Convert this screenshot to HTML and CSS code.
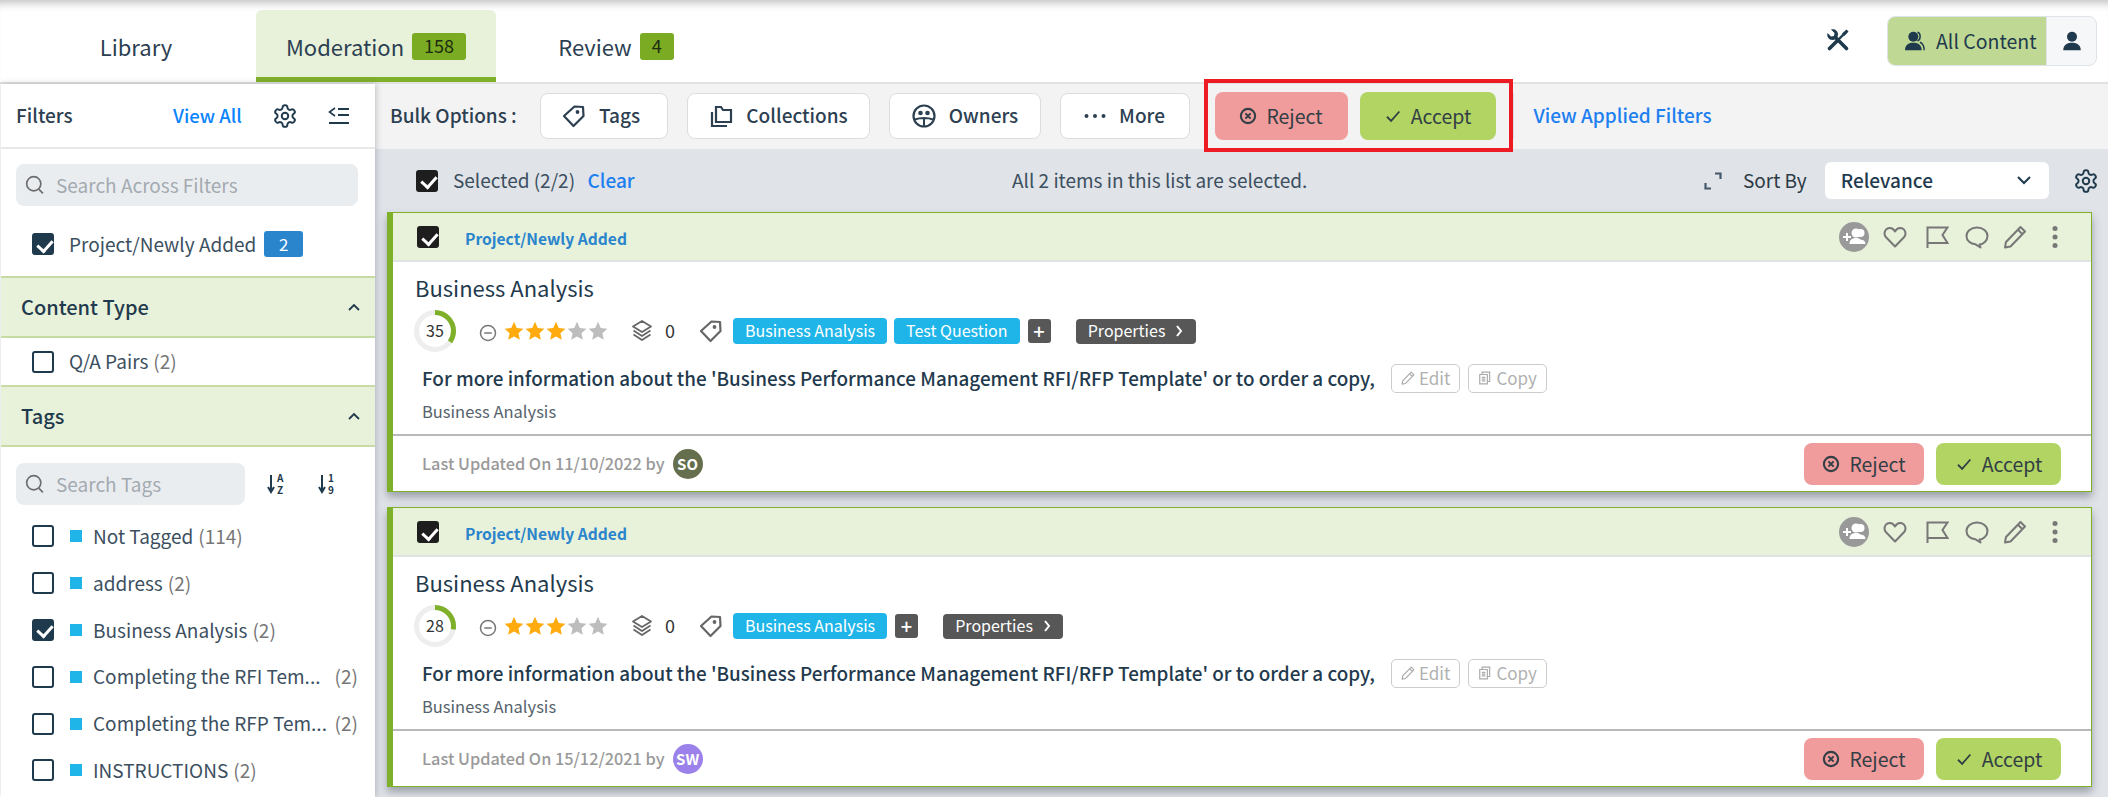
FILE: index.html
```html
<!DOCTYPE html>
<html lang="en">
<head>
<meta charset="utf-8">
<title>Moderation</title>
<link rel="stylesheet" href="styles.css">
</head>
<body>
<svg class="defs" width="0" height="0" aria-hidden="true">
  <defs>
    <symbol id="i-gear" viewBox="0 0 24 24"><path fill="none" stroke="currentColor" stroke-width="1.800" stroke-linejoin="round" d="M12.220 2h-.44a2 2 0 0 0-2 2v.18a2 2 0 0 1-1 1.730l-.43.25a2 2 0 0 1-2 0l-.15-.08a2 2 0 0 0-2.730.73l-.22.38a2 2 0 0 0 .73 2.730l.15.1a2 2 0 0 1 1 1.720v.51a2 2 0 0 1-1 1.740l-.15.09a2 2 0 0 0-.73 2.730l.22.38a2 2 0 0 0 2.730.73l.15-.08a2 2 0 0 1 2 0l.43.25a2 2 0 0 1 1 1.730V20a2 2 0 0 0 2 2h.44a2 2 0 0 0 2-2v-.18a2 2 0 0 1 1-1.730l.43-.25a2 2 0 0 1 2 0l.15.08a2 2 0 0 0 2.730-.73l.22-.39a2 2 0 0 0-.73-2.730l-.15-.08a2 2 0 0 1-1-1.740v-.5a2 2 0 0 1 1-1.740l.15-.09a2 2 0 0 0 .73-2.730l-.22-.38a2 2 0 0 0-2.730-.73l-.15.08a2 2 0 0 1-2 0l-.43-.25a2 2 0 0 1-1-1.730V4a2 2 0 0 0-2-2z"/><circle cx="12" cy="12" r="3" fill="none" stroke="currentColor" stroke-width="1.800"/></symbol>
    <symbol id="i-tag" viewBox="0 0 24 24"><path fill="none" stroke="currentColor" stroke-width="2.200" stroke-linejoin="round" d="M12.500 2.500l8.500.5.500 9L11.500 22 2 12z"/><circle cx="15.500" cy="8" r="1.900" fill="currentColor"/></symbol>
    <symbol id="i-search" viewBox="0 0 24 24"><circle cx="10.500" cy="10.500" r="8.500" fill="none" stroke="currentColor" stroke-width="2"/><path d="M16.500 17l5 5" stroke="currentColor" stroke-width="2" fill="none"/></symbol>
    <symbol id="i-reject" viewBox="0 0 24 24"><circle cx="12" cy="12" r="9.500" fill="none" stroke="currentColor" stroke-width="2.800"/><path d="M8.500 8.500l7 7M15.500 8.500l-7 7" stroke="currentColor" stroke-width="2.800" fill="none"/></symbol>
    <symbol id="i-check" viewBox="0 0 24 24"><path d="M4 13l5.500 5.500L20.500 6" stroke="currentColor" stroke-width="2.400" fill="none"/></symbol>
    <symbol id="i-star" viewBox="0 0 24 24"><path fill="currentColor" d="M12 1l3.300 7.400 8 .9-6 5.400 1.700 7.900-7-4.100-7 4.100 1.700-7.900-6-5.400 8-.9z"/></symbol>
    <symbol id="i-layers" viewBox="0 0 24 24"><path fill="none" stroke="currentColor" stroke-width="1.800" stroke-linejoin="round" d="M12 2l9 5.500-9 5.500-9-5.500zM3.500 11.500L12 17l8.500-5.500M3.500 15.500L12 21l8.500-5.500"/></symbol>
    <symbol id="i-minus" viewBox="0 0 24 24"><circle cx="12" cy="12" r="10" fill="none" stroke="currentColor" stroke-width="2"/><path d="M7 12h10" stroke="currentColor" stroke-width="2"/></symbol>
    <symbol id="i-heart" viewBox="0 0 24 24"><path fill="none" stroke="currentColor" stroke-width="2" stroke-linejoin="round" d="M12 21.500L2.800 12C.5 9 1.500 4.500 5 3.300 8 2.300 10.500 3.800 12 6.500c1.500-2.700 4-4.200 7-3.200 3.500 1.200 4.500 5.700 2.200 8.700z"/></symbol>
    <symbol id="i-flag" viewBox="0 0 24 24"><path fill="none" stroke="currentColor" stroke-width="2" d="M2.500 23V2.500h20L17.500 10l5 8H2.500"/></symbol>
    <symbol id="i-bubble" viewBox="0 0 24 24"><path fill="none" stroke="currentColor" stroke-width="2" stroke-linejoin="round" d="M12 2.500c6 0 10.500 3.700 10.500 8.500S18 19.500 14.500 19.500l1 3-5-3.200C5.500 19 1.500 15.800 1.500 11S6 2.500 12 2.500z"/></symbol>
    <symbol id="i-pencil" viewBox="0 0 24 24"><path fill="none" stroke="currentColor" stroke-width="2" stroke-linejoin="round" d="M17.500 2l4.500 4.500L7.500 21.500 2 22.500l1-5.500zM15 4.800l4.300 4.300"/></symbol>
    <symbol id="i-user" viewBox="0 0 24 24"><circle cx="12" cy="7" r="6" fill="currentColor"/><path fill="currentColor" d="M1.500 23c0-6 4-9 10.500-9s10.500 3 10.500 9z"/></symbol>
    <symbol id="i-users" viewBox="0 0 24 24"><circle cx="10" cy="7" r="6" fill="currentColor"/><path fill="currentColor" d="M0 23c0-6 3.500-9 10-9s10 3 10 9z"/><path fill="none" stroke="currentColor" stroke-width="1.800" d="M15 1.500c4 .8 4.500 8.500 0 10.500M18 13.500c3.500 1.500 5 5 5 9.500"/></symbol>
    <symbol id="i-addusers" viewBox="0 0 30 30"><circle cx="15" cy="15" r="15" fill="#999"/><path fill="#fff" d="M4 14h3v-3h2v3h3v2H9v3H7v-3H4z"/><circle cx="17" cy="11" r="4.500" fill="#fff"/><circle cx="21.500" cy="11" r="4" fill="#fff"/><path fill="#fff" d="M10.500 22c0-4 2.500-6 6.500-6 2.200 0 4 .6 5 1.800 2.500 0 4.500 1.500 4.500 4.200z"/></symbol>
    <symbol id="i-dots" viewBox="0 0 6 24"><circle cx="3" cy="3.500" r="2.500" fill="currentColor"/><circle cx="3" cy="12" r="2.500" fill="currentColor"/><circle cx="3" cy="20.500" r="2.500" fill="currentColor"/></symbol>
    <symbol id="i-copy" viewBox="0 0 24 24"><path fill="none" stroke="currentColor" stroke-width="2" d="M7 6V2h13v16h-4M3 6h13v16H3zM6.500 11h6M6.500 14h6M6.500 17h6"/></symbol>
  </defs>
</svg>

<div class="app">
  <header class="topbar">
    <nav class="tabs">
      <a class="tab tab-library">Library</a>
      <a class="tab tab-active">Moderation <span class="count">158</span></a>
      <a class="tab tab-review">Review <span class="count">4</span></a>
    </nav>
    <div class="top-right">
      <svg class="tools" viewBox="0 0 24 24"><path fill="none" stroke="#1f3a4d" stroke-width="3.600" stroke-linecap="round" d="M3.500 20.500L11 13"/><path fill="none" stroke="#1f3a4d" stroke-width="2.400" d="M11 13l6.500-6.500"/><path fill="#1f3a4d" d="M16 5.500L20.500 1.500 22.500 3.500 18.500 8z"/><path fill="none" stroke="#1f3a4d" stroke-width="3.600" stroke-linecap="round" d="M9.500 9.500l11 11"/><path fill="#1f3a4d" d="M1.500 5L5 8.500l3-.5.5-3L5 1.500c3.500-1 7 1.200 7 5 0 1-.3 2-.8 2.800L9.300 11.200c-.8.500-1.800.8-2.800.8-3.800 0-6-3.500-5-7z"/></svg>
      <div class="scope">
        <div class="scope-all"><svg class="ic-20"><use href="#i-users"/></svg>All Content</div>
        <div class="scope-me"><svg class="ic-20"><use href="#i-user"/></svg></div>
      </div>
    </div>
  </header>

  <div class="main">
    <aside class="sidebar">
      <div class="side-head">
        <span class="side-title">Filters</span>
        <a class="view-all">View All</a>
        <svg class="gear side-gear"><use href="#i-gear"/></svg>
        <svg class="side-collapse" viewBox="0 0 22 20"><path d="M7 2L1.500 6 7 10" fill="none" stroke="#1f3a4d" stroke-width="1.600"/><path d="M10 3h11M10 9h11M1 17h20" stroke="#1f3a4d" stroke-width="1.800"/></svg>
      </div>
      <div class="side-search-wrap">
        <div class="search"><svg class="ic-20"><use href="#i-search"/></svg>Search Across Filters</div>
      </div>
      <label class="row row-applied"><span class="cb on"></span><span class="row-name">Project/Newly Added</span><span class="applied-num">2</span></label>

      <div class="group-head">Content Type<svg class="chev" viewBox="0 0 12 8"><path d="M1 7l5-5 5 5" fill="none" stroke="#1f3a4d" stroke-width="1.800"/></svg></div>
      <label class="row row-type"><span class="cb"></span><span class="row-name">Q/A Pairs</span><span class="n n-gap">(2)</span></label>

      <div class="group-head">Tags<svg class="chev" viewBox="0 0 12 8"><path d="M1 7l5-5 5 5" fill="none" stroke="#1f3a4d" stroke-width="1.800"/></svg></div>
      <div class="tag-tools">
        <div class="search search-tags"><svg class="ic-20"><use href="#i-search"/></svg>Search Tags</div>
        <span class="sort-ic"><svg viewBox="0 0 8 20" class="sort-arrow"><path d="M4 1v16M1 13l3 5 3-5" fill="none" stroke="#1f3a4d" stroke-width="2"/></svg><span class="sort-t">A<br>Z</span></span>
        <span class="sort-ic"><svg viewBox="0 0 8 20" class="sort-arrow"><path d="M4 1v16M1 13l3 5 3-5" fill="none" stroke="#1f3a4d" stroke-width="2"/></svg><span class="sort-t">1<br>9</span></span>
      </div>
      <ul class="tag-list">
        <li class="row"><span class="cb"></span><i class="sq"></i><span class="row-name">Not Tagged</span><span class="n n-gap">(114)</span></li>
        <li class="row"><span class="cb"></span><i class="sq"></i><span class="row-name">address</span><span class="n n-gap">(2)</span></li>
        <li class="row"><span class="cb on"></span><i class="sq"></i><span class="row-name">Business Analysis</span><span class="n n-gap">(2)</span></li>
        <li class="row"><span class="cb"></span><i class="sq"></i><span class="row-name">Completing the RFI Tem...</span><span class="n n-end">(2)</span></li>
        <li class="row"><span class="cb"></span><i class="sq"></i><span class="row-name">Completing the RFP Tem...</span><span class="n n-end">(2)</span></li>
        <li class="row"><span class="cb"></span><i class="sq"></i><span class="row-name">INSTRUCTIONS</span><span class="n n-gap">(2)</span></li>
      </ul>
    </aside>

    <section class="content">
      <div class="toolbar">
        <span class="bulk-label">Bulk Options :</span>
        <button class="tbtn tbtn-tags"><svg class="ic-24"><use href="#i-tag"/></svg>Tags</button>
        <button class="tbtn tbtn-coll"><svg class="ic-24" viewBox="0 0 24 24"><path fill="none" stroke="currentColor" stroke-width="2.200" d="M3 8v14h15M7 3v15h15V6H14l-2-3z"/></svg>Collections</button>
        <button class="tbtn tbtn-own"><svg class="ic-24" viewBox="0 0 24 24"><circle cx="12" cy="12" r="10.500" fill="none" stroke="currentColor" stroke-width="2.200"/><circle cx="8.500" cy="9" r="2.300" fill="currentColor"/><circle cx="15.500" cy="9" r="2.300" fill="currentColor"/><path d="M3 15.500c5-2 13-2 18 0M12 14v8" stroke="currentColor" stroke-width="2" fill="none"/></svg>Owners</button>
        <button class="tbtn tbtn-more"><svg class="ell" viewBox="0 0 22 4"><circle cx="2.500" cy="2" r="2" fill="currentColor"/><circle cx="11" cy="2" r="2" fill="currentColor"/><circle cx="19.500" cy="2" r="2" fill="currentColor"/></svg>More</button>
        <button class="act act-reject act-lg"><svg class="ic-18"><use href="#i-reject"/></svg>Reject</button>
        <button class="act act-accept act-lg act-lg-accept"><svg class="ic-18"><use href="#i-check"/></svg>Accept</button>
        <span class="tb-sep"></span>
        <a class="applied">View Applied Filters</a>
        <div class="highlight"></div>
      </div>

      <div class="selbar">
        <span class="cb dark"></span>
        <span class="sel-text">Selected (2/2)</span>
        <a class="clear">Clear</a>
        <span class="sel-all">All 2 items in this list are selected.</span>
        <svg class="expand" viewBox="0 0 18 18"><path d="M11 1.500h5.500V7M7 16.500H1.500V11" fill="none" stroke="#44586a" stroke-width="2.200"/></svg>
        <span class="sort-by">Sort By</span>
        <div class="select">Relevance<svg class="sel-chev" viewBox="0 0 14 9"><path d="M1 1l6 6 6-6" fill="none" stroke="#1f3a4d" stroke-width="2"/></svg></div>
        <svg class="gear sel-gear"><use href="#i-gear"/></svg>
      </div>

      <div class="cards">
        <article class="card">
          <div class="card-head">
            <span class="cb dark"></span><a class="crumb">Project/Newly Added</a>
            <div class="head-icons">
              <svg class="hi-add"><use href="#i-addusers"/></svg>
              <svg class="hi hi-heart"><use href="#i-heart"/></svg>
              <svg class="hi hi-flag"><use href="#i-flag"/></svg>
              <svg class="hi hi-bubble"><use href="#i-bubble"/></svg>
              <svg class="hi hi-pencil"><use href="#i-pencil"/></svg>
              <svg class="hi-dots"><use href="#i-dots"/></svg>
            </div>
          </div>
          <div class="card-body">
            <h3 class="card-title">Business Analysis</h3>
            <div class="meta">
              <span class="ring"><svg viewBox="0 0 42 42"><circle cx="21" cy="21" r="18.500" fill="none" stroke="#eee" stroke-width="5"/><circle cx="21" cy="21" r="18.500" fill="none" stroke="#7fb02a" stroke-width="5" pathLength="100" stroke-dasharray="35 100" transform="rotate(-90 21 21)"/></svg><b>35</b></span>
              <svg class="m-minus"><use href="#i-minus"/></svg>
              <span class="stars"><svg class="s on"><use href="#i-star"/></svg><svg class="s on"><use href="#i-star"/></svg><svg class="s on"><use href="#i-star"/></svg><svg class="s"><use href="#i-star"/></svg><svg class="s"><use href="#i-star"/></svg></span>
              <svg class="m-layers"><use href="#i-layers"/></svg><span class="m-count">0</span>
              <svg class="m-tag"><use href="#i-tag"/></svg>
              <span class="chip">Business Analysis</span><span class="chip">Test Question</span><span class="plus">+</span>
              <span class="props">Properties<svg viewBox="0 0 8 12"><path d="M2 1l4 5-4 5" fill="none" stroke="#fff" stroke-width="2"/></svg></span>
            </div>
            <div class="desc-row">
              <p class="desc">For more information about the 'Business Performance Management RFI/RFP Template' or to order a copy,</p>
              <span class="mini"><svg class="ic-14"><use href="#i-pencil"/></svg>Edit</span>
              <span class="mini"><svg class="ic-14"><use href="#i-copy"/></svg>Copy</span>
            </div>
            <div class="source">Business Analysis</div>
          </div>
          <div class="card-foot">
            <span class="updated">Last Updated On 11/10/2022 by</span>
            <span class="avatar av-so">SO</span>
            <button class="act act-reject act-sm"><svg class="ic-18"><use href="#i-reject"/></svg>Reject</button>
            <button class="act act-accept act-sm"><svg class="ic-18"><use href="#i-check"/></svg>Accept</button>
          </div>
        </article>

        <article class="card">
          <div class="card-head">
            <span class="cb dark"></span><a class="crumb">Project/Newly Added</a>
            <div class="head-icons">
              <svg class="hi-add"><use href="#i-addusers"/></svg>
              <svg class="hi hi-heart"><use href="#i-heart"/></svg>
              <svg class="hi hi-flag"><use href="#i-flag"/></svg>
              <svg class="hi hi-bubble"><use href="#i-bubble"/></svg>
              <svg class="hi hi-pencil"><use href="#i-pencil"/></svg>
              <svg class="hi-dots"><use href="#i-dots"/></svg>
            </div>
          </div>
          <div class="card-body">
            <h3 class="card-title">Business Analysis</h3>
            <div class="meta">
              <span class="ring"><svg viewBox="0 0 42 42"><circle cx="21" cy="21" r="18.500" fill="none" stroke="#eee" stroke-width="5"/><circle cx="21" cy="21" r="18.500" fill="none" stroke="#7fb02a" stroke-width="5" pathLength="100" stroke-dasharray="28 100" transform="rotate(-90 21 21)"/></svg><b>28</b></span>
              <svg class="m-minus"><use href="#i-minus"/></svg>
              <span class="stars"><svg class="s on"><use href="#i-star"/></svg><svg class="s on"><use href="#i-star"/></svg><svg class="s on"><use href="#i-star"/></svg><svg class="s"><use href="#i-star"/></svg><svg class="s"><use href="#i-star"/></svg></span>
              <svg class="m-layers"><use href="#i-layers"/></svg><span class="m-count">0</span>
              <svg class="m-tag"><use href="#i-tag"/></svg>
              <span class="chip">Business Analysis</span><span class="plus">+</span>
              <span class="props">Properties<svg viewBox="0 0 8 12"><path d="M2 1l4 5-4 5" fill="none" stroke="#fff" stroke-width="2"/></svg></span>
            </div>
            <div class="desc-row">
              <p class="desc">For more information about the 'Business Performance Management RFI/RFP Template' or to order a copy,</p>
              <span class="mini"><svg class="ic-14"><use href="#i-pencil"/></svg>Edit</span>
              <span class="mini"><svg class="ic-14"><use href="#i-copy"/></svg>Copy</span>
            </div>
            <div class="source">Business Analysis</div>
          </div>
          <div class="card-foot">
            <span class="updated">Last Updated On 15/12/2021 by</span>
            <span class="avatar av-sw">SW</span>
            <button class="act act-reject act-sm"><svg class="ic-18"><use href="#i-reject"/></svg>Reject</button>
            <button class="act act-accept act-sm"><svg class="ic-18"><use href="#i-check"/></svg>Accept</button>
          </div>
        </article>
      </div>
    </section>
  </div>
</div>
</body>
</html>
```
FILE: styles.css
```css
* { box-sizing: border-box; }
html, body { margin: 0; padding: 0; height: 100%; }
body { font-family: "Noto Sans CJK SC", "Source Sans Pro", "Noto Sans", sans-serif; color: #2c4052; background: #fff; overflow: hidden; line-height: 1.2; }
.defs { position: absolute; }
button { font: inherit; color: inherit; cursor: pointer; }
ul { list-style: none; margin: 0; padding: 0; }
a { cursor: pointer; }
svg { flex: none; display: block; }
.ic-14 { width: 14px; height: 14px; }
.ic-16 { width: 16px; height: 16px; }
.ic-18 { width: 18px; height: 18px; }
.ic-20 { width: 20px; height: 20px; }
.ic-22 { width: 22px; height: 22px; }
.ic-24 { width: 24px; height: 24px; }
.gear { width: 26px; height: 26px; color: #1f3a4d; }

.app { height: 797px; display: flex; flex-direction: column; overflow: hidden; }

/* top bar */
.topbar { height: 84px; flex: none; display: flex; align-items: flex-end; padding-left: 1px; border-bottom: 2px solid #e2e2e2; box-shadow: inset 0 10px 9px -7px rgba(0,0,0,.25); }
.tabs { display: flex; height: 72px; }
.tab { display: flex; align-items: center; justify-content: center; font-size: 22px; color: #2c4052; height: 72px; gap: 8px; }
.tab-library { width: 255px; padding-left: 15px; }
.tab-active { width: 240px; background: #e8f1da; border-bottom: 5px solid #7fb02a; border-radius: 6px 6px 0 0; padding-top: 5px; }
.tab-review { width: 240px; }
.count { background: #7aab22; color: #1d2b10; font-size: 18px; height: 27px; padding: 0 12px; border-radius: 3px; display: inline-flex; align-items: center; }
.top-right { margin-left: auto; display: flex; align-items: center; padding-right: 11px; align-self: stretch; padding-top: 16px; padding-bottom: 16px; }
.tools { width: 24px; height: 24px; margin-right: 37px; margin-top: -2px; }
.scope { width: 210px; height: 50px; display: flex; border: 1px solid #dfe3ea; border-radius: 8px; overflow: hidden; background: #f6f7f8; }
.scope-all { width: 158px; background: #bfd994; display: flex; align-items: center; font-size: 19.500px; color: #1f3a4d; padding-left: 17px; gap: 11px; }
.scope-all svg, .scope-me svg { color: #1f3a4d; }
.scope-me { flex: 1; display: flex; align-items: center; justify-content: center; border-left: 1px solid #dfe3ea; }

.main { flex: 1; display: flex; min-height: 0; }

/* sidebar */
.sidebar { width: 374px; flex: none; margin-left: 1px; background: #fff; box-shadow: 1px 0 6px rgba(60,70,90,.3); position: relative; z-index: 2; }
.side-head { height: 65px; display: flex; align-items: center; padding-left: 15px; border-bottom: 2px solid #e8e8e8; }
.side-title { font-size: 19px; font-weight: 500; color: #2c4052; width: 157px; }
.view-all { color: #0a84ff; font-size: 18.500px; font-weight: 500; width: 100px; }
.side-gear { margin-left: -1px; }
.side-collapse { width: 22px; height: 20px; margin-left: 30px; }
.side-search-wrap { padding: 15px 17px 0 15px; }
.search { height: 42px; border-radius: 8px; background: #eaedf0; color: #a3aab0; font-size: 19px; display: flex; align-items: center; gap: 11px; padding-left: 9px; }
.search svg { color: #6d6d6d; }
.row { display: flex; align-items: center; font-size: 19px; color: #3c4f60; height: 46.800px; padding: 0 17px 0 31px; }
.row-applied { height: 70px; padding-top: 6px; }
.row-type { height: 47px; }
.row-name { white-space: nowrap; }
.row-applied .row-name, .row-type .row-name { margin-left: 15px; }
.n { color: #777; }
.n-gap { margin-left: 5px; }
.n-end { margin-left: auto; }
.applied-num { background: #2a85cd; color: #fff; font-size: 17px; height: 26px; width: 39px; margin-left: 8px; border-radius: 3px; display: flex; align-items: center; justify-content: center; }
.cb { width: 22px; height: 22px; flex: none; border: 2px solid #1f3a4d; border-radius: 3px; background: #fff; position: relative; display: block; }
.cb.on { background: #1f3a4d; }
.cb.dark { background: #1e1e1e; border-color: #1e1e1e; }
.cb.on::after, .cb.dark::after { content: ""; position: absolute; left: 5.500px; top: 1.500px; width: 7px; height: 12px; border: solid #fff; border-width: 0 3px 3px 0; transform: rotate(42deg); }
.group-head { height: 62px; display: flex; align-items: center; justify-content: space-between; padding: 0 15px 0 20px; background: #e8f1da; border-top: 2px solid #c7dca5; border-bottom: 2px solid #c7dca5; font-size: 20px; font-weight: 500; color: #1f3a4d; }
.chev { width: 12px; height: 8px; }
.tag-tools { display: flex; align-items: center; padding: 16px 0 8px 15px; }
.search-tags { width: 229px; flex: none; }
.sort-ic { display: flex; align-items: center; width: 51px; gap: 2px; flex: none; }
.search-tags + .sort-ic { margin-left: 22px; }
.sort-arrow { width: 8px; height: 20px; }
.sort-t { font-size: 10px; line-height: 12px; font-weight: 700; color: #1f3a4d; }
.tag-list .row .cb { margin-right: 16px; }
.sq { width: 12px; height: 12px; background: #1fb5e8; flex: none; margin-right: 11px; }

/* content */
.content { flex: 1; min-width: 0; background: #e0e3e8; }
.toolbar { height: 65px; background: #f3f3f3; display: flex; align-items: center; padding: 0 0 2px 15px; position: relative; }
.bulk-label { font-size: 19px; font-weight: 500; width: 150px; color: #2c4052; }
.tbtn { height: 46px; border: 1px solid #ddd; background: #fff; border-radius: 8px; display: flex; align-items: center; justify-content: center; font-size: 19px; font-weight: 500; gap: 13px; padding: 0; color: #2c4052; margin-right: 19px; }
.tbtn-tags { width: 128px; padding-right: 6px; }
.tbtn-coll { width: 183px; }
.tbtn-own { width: 152px; margin-right: 18.500px; }
.tbtn-more { width: 130px; margin-right: 25px; }
.ell { width: 22px; height: 4px; }
.act { border: 0; border-radius: 8px; display: flex; align-items: center; justify-content: center; font-size: 19.500px; color: #333f45; gap: 9px; padding: 0; }
.act-reject { background: #f19c9c; }
.act-accept { background: #b1d463; }
.act-lg { width: 133px; height: 48px; margin-right: 12px; }
.act-lg-accept { width: 136px; margin-right: 17px; }
.act-sm { height: 42px; width: 120px; }
.act-sm.act-accept { width: 125px; margin-left: 12px; }
.tb-sep { width: 1px; height: 46px; background: #ddd; margin-right: 20px; }
.applied { color: #1d7ff0; font-size: 19px; font-weight: 500; }
.highlight { position: absolute; left: 829px; top: -5px; width: 309px; height: 73px; border: 4px solid #ed1c24; pointer-events: none; }

.selbar { height: 63px; display: flex; align-items: center; padding: 0 9px 0 41px; }
.sel-text { font-size: 19px; color: #3c4f60; margin-left: 15px; width: 135px; }
.clear { color: #1d7ff0; font-size: 19px; font-weight: 500; width: 426px; }
.sel-all { font-size: 19px; color: #3c4f60; flex: none; width: 692px; }
.expand { width: 18px; height: 18px; }
.sort-by { font-size: 19px; color: #2c3a45; margin-left: 21px; width: 82px; }
.select { width: 225px; height: 37px; background: #fff; border-radius: 6px; display: flex; align-items: center; justify-content: space-between; padding: 0 18px 0 16px; font-size: 19px; font-weight: 500; color: #1f3a4d; }
.sel-chev { width: 14px; height: 9px; }
.sel-gear { margin-left: 24px; }

.cards { padding-left: 12px; width: 1717px; display: flex; flex-direction: column; gap: 15px; }
.card { height: 280px; background: #fff; border: 1px solid #7fb02a; border-left: 6px solid #7fb02a; box-shadow: 0 5px 8px rgba(70,80,90,.45); display: flex; flex-direction: column; }
.card-head { height: 49px; flex: none; background: #e8f1da; border-bottom: 2px solid #e0e3e3; display: flex; align-items: center; padding: 1px 33px 0 24px; }
.crumb { color: #2a85cd; font-size: 15.600px; font-weight: 600; margin-left: 26px; margin-top: 3px; }
.head-icons { margin-left: auto; display: flex; align-items: center; }
.hi-add { width: 30px; height: 30px; }
.hi { width: 24px; height: 24px; color: #777; }
.hi-heart { margin-left: 14px; }
.hi-flag { margin-left: 18px; }
.hi-bubble { margin-left: 16px; }
.hi-pencil { margin-left: 14px; }
.hi-dots { width: 6px; height: 24px; color: #777; margin-left: 25px; }
.card-body { flex: 1; padding: 0 0 0 22px; border-bottom: 2px solid #b9b9b9; }
.card-title { margin: 12px 0 0; font-size: 22px; font-weight: 400; color: #1f3a4d; height: 26px; line-height: 26px; }
.meta { display: flex; align-items: center; height: 42px; margin-top: 10px; margin-left: -1px; }
.ring { width: 42px; height: 42px; position: relative; display: block; flex: none; }
.ring svg { width: 42px; height: 42px; }
.ring b { position: absolute; inset: 0; display: flex; align-items: center; justify-content: center; font-weight: 400; font-size: 16px; color: #333; }
.m-minus { width: 18px; height: 18px; color: #777; margin-left: 23px; margin-top: 4px; }
.stars { display: flex; margin-left: 7px; }
.s { width: 20px; height: 20px; margin-right: 1px; color: #bdbdbd; }
.s.on { color: #ffaa0d; }
.m-layers { width: 24px; height: 24px; color: #666; margin-left: 21px; }
.m-count { font-size: 18px; color: #333; margin-left: 11px; }
.m-tag { width: 24px; height: 24px; color: #666; margin-left: 24px; margin-right: 10px; }
.chip { background: #1fb5e8; color: #fff; font-size: 16px; height: 26px; padding: 0 12px; border-radius: 4px; display: flex; align-items: center; margin-right: 7px; white-space: nowrap; }
.plus { background: #575757; color: #fff; font-size: 20px; font-weight: 500; height: 24px; width: 23px; border-radius: 3px; display: flex; align-items: center; justify-content: center; margin-left: 1px; }
.props { background: #575757; color: #fff; font-size: 16px; height: 25px; padding: 0 9px; border-radius: 4px; display: flex; align-items: center; gap: 10px; margin-left: 25px; width: 120px; justify-content: center; }
.props svg { width: 8px; height: 12px; }
.desc-row { display: flex; align-items: center; height: 30px; margin-top: 11px; padding-left: 7px; gap: 8px; }
.desc { margin: 0 8px 0 0; font-size: 18.850px; font-weight: 500; color: #1f3a4d; white-space: nowrap; }
.mini { height: 29px; border: 1px solid #ccc; border-radius: 5px; display: flex; align-items: center; gap: 4px; padding: 0 9px; font-size: 17px; color: #b0b0b0; }
.mini svg { color: #aaa; }
.source { font-size: 16.500px; color: #55626c; padding-left: 7px; margin-top: 9px; }
.card-foot { height: 55px; flex: none; display: flex; align-items: center; padding: 0 30px 0 29px; }
.updated { font-size: 16.300px; font-weight: 500; color: #999; }
.avatar { width: 30px; height: 30px; border-radius: 50%; color: #fff; font-size: 15px; font-weight: 700; display: flex; align-items: center; justify-content: center; margin-left: 8px; margin-right: auto; }
.av-so { background: #666f4d; }
.av-sw { background: #9a82ea; }
```
